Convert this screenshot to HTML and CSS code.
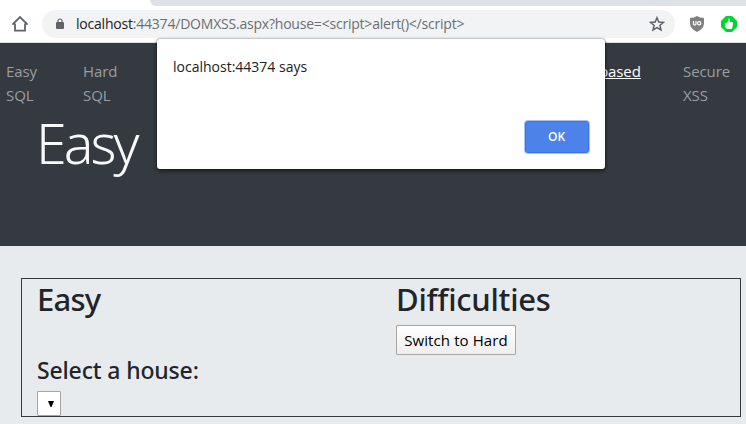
FILE: index.html
```html
<!DOCTYPE html>
<html lang="en">
<head>
<meta charset="utf-8">
<title>Easy</title>
<link rel="stylesheet" href="styles.css">
</head>
<body>
<div class="tabstrip"><div class="tab"></div><div class="strip"></div></div>
<div class="toolbar">
  <svg class="home" width="18" height="18" viewBox="0 0 18 18"><path d="M4 8.5V15.7H14V8.5M1.4 9.7L9 2L16.6 9.7" fill="none" stroke="#5f6368" stroke-width="1.8"/></svg>
  <div class="omnibox">
    <svg class="lock" width="8" height="11" viewBox="0 0 8 11"><path d="M2 5V3a2 2 0 0 1 4 0V5" fill="none" stroke="#5f6368" stroke-width="1.2"/><rect y="4" width="8" height="7" rx="1" fill="#5f6368"/></svg>
    <span class="url"><b>localhost</b>:44374/DOMXSS.aspx?house=&lt;script&gt;alert()&lt;/script&gt;</span>
    <svg class="star" width="16" height="16" viewBox="0 0 16 16"><path d="M8 1.7L9.8 6L14.5 6.4L10.9 9.5L12 14L8 11.6L4 14L5.1 9.5L1.5 6.4L6.2 6Z" fill="none" stroke="#5f6368" stroke-width="1.5"/></svg>
  </div>
  <svg class="shield" width="14" height="16" viewBox="0 0 14 16"><path d="M7 0Q10 2 14 2V7Q14 13 7 16Q0 13 0 7V2Q4 2 7 0Z" fill="#808080"/><path d="M3.5 5V8Q3.5 9 4.7 9Q6 9 6 8V5" fill="none" stroke="#fff" stroke-width="1.2"/><circle cx="9.2" cy="7.2" r="1.6" fill="none" stroke="#fff" stroke-width="1.2"/></svg>
  <svg class="thumb" width="16" height="16" viewBox="0 0 16 16"><path d="M5 0H11L16 5V11L11 16H5L0 11V5Z" fill="#00d632"/><path d="M4 7H5.5L7.2 5V3Q8.2 1.8 9 3V6H11Q12.3 6 12 7.2L11.3 11.8Q11 13 10 13H6L4 11Z" fill="#fff"/></svg>
</div>
<header class="hero">
  <nav class="nav">
    <a class="easy">Easy<br>SQL</a><a class="hard">Hard<br>SQL</a><a class="active">based</a><a class="secure">Secure<br>XSS</a>
  </nav>
  <h1>Easy</h1>
</header>
<main class="panel">
  <section class="col">
    <h2 class="title">Easy</h2>
    <h3>Select a house:</h3>
    <div class="select"><svg width="6" height="6" viewBox="0 0 6 6"><path d="M0 0H6L3.5 6H2.5Z"/></svg></div>
  </section>
  <section class="col">
    <h2 class="diff">Difficulties</h2>
    <button class="switch">Switch to Hard</button>
  </section>
</main>
<div class="dialog">
  <p>localhost:44374 says</p>
  <button class="ok">OK</button>
</div>
</body>
</html>
```
FILE: styles.css
```css
* { box-sizing: border-box; }
body { margin: 0; height: 424px; overflow: hidden; background: #e8ebee; font: 15px/24px "Open Sans", "Noto Sans", sans-serif; color: #212529; }
h1, h2, h3, p { margin: 0; white-space: nowrap; }
.tabstrip { display: flex; height: 6px; background: #fff; }
.tab { width: 150px; }
.strip { flex: 1; background: #dee1e6; border-bottom-left-radius: 6px; }
.toolbar { display: flex; align-items: center; height: 37px; padding: 0 9px 1px 11px; background: #fff; border-bottom: 1px solid #dadce0; }
.home { margin-right: 13px; }
.omnibox { display: flex; align-items: center; width: 633px; height: 28px; padding: 0 10px 0 14px; border-radius: 14px; background: #f1f3f4; }
.url { margin-left: 12px; flex: 1; font-size: 14px; letter-spacing: -0.21px; color: #6b6f73; white-space: nowrap; }
.url b { font-weight: 400; color: #202124; }
.shield { margin-left: 15px; }
.thumb { margin-left: 17px; }
.hero { height: 203px; padding: 16px 0 0 6px; background: #353a41; }
.nav { display: flex; height: 48px; color: #9a9da0; }
.nav a { flex-shrink: 0; letter-spacing: -0.1px; white-space: nowrap; }
.easy { width: 77px; }
.hard { width: 516px; }
.nav .active { width: 84px; color: #fff; text-decoration: underline; }
h1 { margin: 2px 0 0 30px; font-size: 55.5px; line-height: 67px; font-family: "Noto Sans", "Open Sans", sans-serif; font-weight: 300; letter-spacing: -3px; color: #f8f9fa; }
.panel { display: flex; width: 720px; height: 139px; margin: 32px 0 0 21px; padding: 0 15px; border: 1px solid #343a40; }
.col { flex: 0 0 359px; }
h2, h3 { font-family: "Noto Sans", "Open Sans", sans-serif; font-weight: 500; }
h2 { font-size: 31px; line-height: 38px; padding-top: 1px; letter-spacing: -0.25px; }
.title { letter-spacing: -0.8px; }
h3 { margin-top: 38px; font-size: 23px; line-height: 29px; letter-spacing: -0.15px; }
.select { display: flex; align-items: center; justify-content: center; width: 24px; height: 25px; margin-top: 6px; padding-left: 4px; border: 1px solid #a6a6a6; border-radius: 1px; background: #fff; }
.switch { display: block; width: 120px; height: 30px; margin-top: 7px; padding: 0; border: 1px solid #a6a6a6; border-radius: 1px; background: linear-gradient(#fff, #eee); color: #000; font: 15px/28px "Open Sans", sans-serif; letter-spacing: 0.1px; white-space: nowrap; }
.dialog { position: absolute; left: 157px; top: 39px; width: 448px; height: 130px; padding: 16px; display: flex; flex-direction: column; justify-content: space-between; background: #fff; border-radius: 3px; box-shadow: 0 0 2px #0009, 0 2px 4px #0008; }
.dialog p { font-size: 14px; line-height: 24px; color: #202124; }
.ok { align-self: flex-end; width: 64px; height: 32px; padding: 0 1px 0 0; border: 1px solid #3b73e3; border-radius: 3px; box-shadow: 0 0 0 1px #aac3f6; background: #4d82ea; color: #fff; font: 600 12px/30px "Open Sans", sans-serif; }
```
